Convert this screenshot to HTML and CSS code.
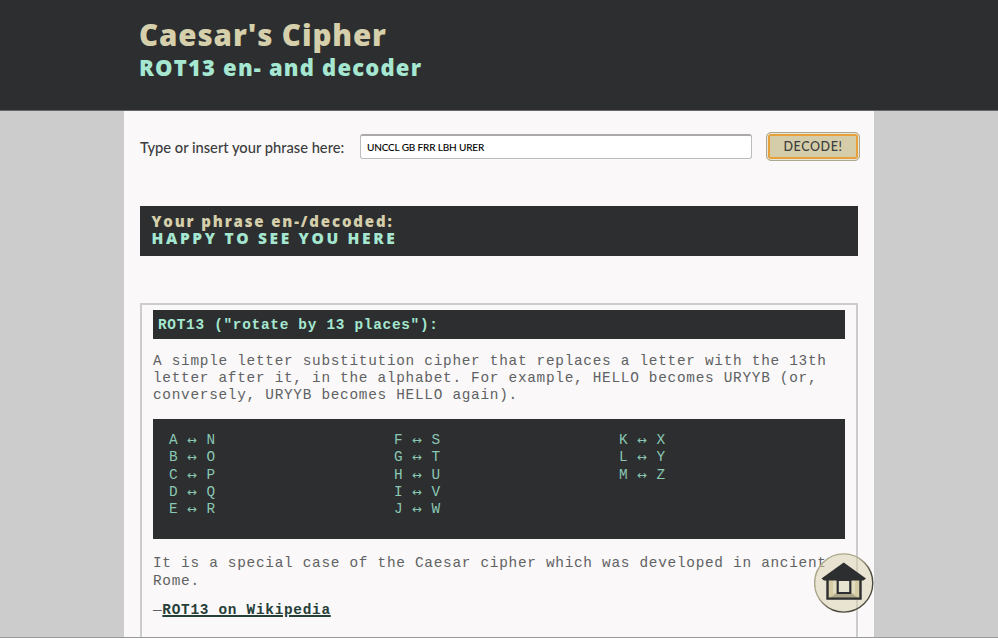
FILE: index.html
```html
<!DOCTYPE html>
<html lang="en">
<head>
<meta charset="utf-8">
<title>Caesar's Cipher</title>
<link rel="stylesheet" href="styles.css">
</head>
<body>
<header class="header">
  <div class="header-inner">
    <h1 class="title">Caesar's Cipher</h1>
    <h2 class="subtitle">ROT13 en- and decoder</h2>
  </div>
</header>
<main class="page">
  <form class="form">
    <label class="label" for="phrase"><span>Type or insert your phrase here:</span></label>
    <input class="input" id="phrase" type="text" value="UNCCL GB FRR LBH URER">
    <button class="button" type="button">DECODE!</button>
  </form>
  <section class="result">
    <p class="result-label">Your phrase en-/decoded:</p>
    <p class="result-text">HAPPY TO SEE YOU HERE</p>
  </section>
  <section class="info">
    <h3 class="info-title">ROT13 ("rotate by 13 places"):</h3>
    <p class="text">A simple letter substitution cipher that replaces a letter with the 13th letter after it, in the alphabet. For example, HELLO becomes URYYB (or, conversely, URYYB becomes HELLO again).</p>
    <div class="table">
      <ul class="pairs"><li>A <i>↔</i> N</li><li>B <i>↔</i> O</li><li>C <i>↔</i> P</li><li>D <i>↔</i> Q</li><li>E <i>↔</i> R</li></ul>
      <ul class="pairs"><li>F <i>↔</i> S</li><li>G <i>↔</i> T</li><li>H <i>↔</i> U</li><li>I <i>↔</i> V</li><li>J <i>↔</i> W</li></ul>
      <ul class="pairs"><li>K <i>↔</i> X</li><li>L <i>↔</i> Y</li><li>M <i>↔</i> Z</li></ul>
    </div>
    <p class="text">It is a special case of the Caesar cipher which was developed in ancient Rome.</p>
    <p class="text source">—<a class="link" href="#">ROT13 on Wikipedia</a></p>
  </section>
</main>
<a class="home" href="#" aria-label="Home">
  <svg width="60" height="60" viewBox="0 0 60 60">
    <defs><linearGradient id="rim" x1="0" y1="0" x2="1" y2="1"><stop offset=".4" stop-color="#aaa688"/><stop offset=".65" stop-color="#4c4b3d"/></linearGradient></defs>
    <circle cx="29.7" cy="30" r="29.1" fill="#d6cfaa" fill-opacity=".5" stroke="url(#rim)" stroke-width="1.4"/>
    <path d="M13.5 27h33v18.5h-33z" fill="#d5cda5"/>
    <path d="M19 27h22v13H19z" fill="#e2ddc0"/>
    <path d="M13.5 46l10-6h13l10 6z" fill="#aaa588"/>
    <path d="M23.7 27h12.6v13H23.7z" fill="#e8e4d2" stroke="#2c2e2f" stroke-width="2.2"/>
    <path d="M13.5 26v19.6h33V26" fill="none" stroke="#2c2e2f" stroke-width="2.4"/>
    <path d="M29.7 9.5L52 25.4l-2.5 2h-39.5l-2.5-2z" fill="#2c2e2f"/>
  </svg>
</a>
</body>
</html>
```
FILE: styles.css
```css
* { box-sizing: border-box; }
html { height: 100%; overflow: hidden; background: #ccc; }
body {
  margin: 0;
  height: 638px;
  overflow: hidden;
  display: flex;
  flex-direction: column;
  border-bottom: 1px solid #989898;
  background: #ccc;
  color: #3b3d3e;
  font-family: Lato, "Open Sans", sans-serif;
}
h1, h2, h3, p, ul { margin: 0; padding: 0; font-weight: normal; }
.header {
  flex: none;
  height: 111px;
  background: #2c2e2f;
  border-bottom: 1px solid #666;
}
.header-inner { width: 750px; margin: 0 auto; padding: 16px 15px 0; }
.title, .subtitle { font-family: "Open Sans", sans-serif; font-weight: 800; }
.title { font-size: 29.5px; line-height: 38px; color: #d5cfab; letter-spacing: 0.9px; }
.subtitle { font-size: 22px; line-height: 26px; color: #a5e7d0; letter-spacing: 1.2px; }
.page {
  flex: none;
  width: 750px;
  height: 526px;
  overflow: hidden;
  margin: 0 auto;
  padding: 21px 16px 0;
  background: #faf8f9;
}
.form { display: flex; align-items: center; width: 720px; height: 29px; }
.label { flex: none; width: 220px; font-size: 14.7px; font-weight: 500; white-space: nowrap; }
.input {
  flex: none;
  width: 392px;
  height: 25px;
  margin-right: 14px;
  padding: 0 6px 1px;
  border: 1px solid #bcbcbc;
  border-top: 2px solid #aaa;
  border-radius: 3px;
  background: #fff;
  color: #000;
  font: 500 10px Lato, sans-serif;
  letter-spacing: -0.15px;
}
.button {
  flex: none;
  width: 94px;
  height: 29px;
  padding: 0;
  border: 1px solid #aaa78e;
  border-radius: 5px;
  background: #d5cda9;
  box-shadow: inset 0 0 0 1px #e9e6db, inset 0 0 0 3px #e6a13c;
  color: #3b3d3e;
  font: 500 12.5px Lato, sans-serif;
  letter-spacing: 0.6px;
}
.result {
  height: 50px;
  margin-top: 45px;
  padding: 6px 11.5px 0;
  background: #2c2e2f;
  font-family: "Open Sans", sans-serif;
  font-size: 15px;
  line-height: 18px;
}
.result p { font-weight: 800; }
.result-label { color: #d5cfab; letter-spacing: 1.85px; }
.result .result-text { color: #a5e7d0; font-size: 15.5px; line-height: 17px; letter-spacing: 2.65px; }
.info {
  height: 500px;
  margin-top: 47px;
  padding: 5px 11px 0;
  border: 2px solid #ccc;
  font: 14.4px/17.3px "Liberation Mono", monospace;
  letter-spacing: 0.72px;
  color: #606263;
}
.info-title {
  height: 29px;
  padding-left: 5px;
  background: #2c2e2f;
  color: #a5e7d0;
  font-size: 14.4px;
  line-height: 30px;
  font-weight: bold;
}
.text { margin-top: 13.5px; }
.table {
  display: grid;
  grid-template-columns: repeat(3, 225px);
  height: 120px;
  margin: 14.5px 0 16.5px;
  padding: 13.3px 16px;
  background: #2c2e2f;
  color: #8ac7b4;
}
.pairs { list-style: none; }
.pairs i { display: inline-block; width: 9.36px; font: 12px/12px "DejaVu Sans", sans-serif; text-indent: -1px; letter-spacing: 0; }
.text.source { margin-top: 12px; }
.link { color: #263f37; font-weight: bold; text-decoration: underline; text-decoration-thickness: 2px; }
.home { position: fixed; left: 814px; top: 553px; width: 60px; height: 60px; }
.home svg { display: block; }
```
